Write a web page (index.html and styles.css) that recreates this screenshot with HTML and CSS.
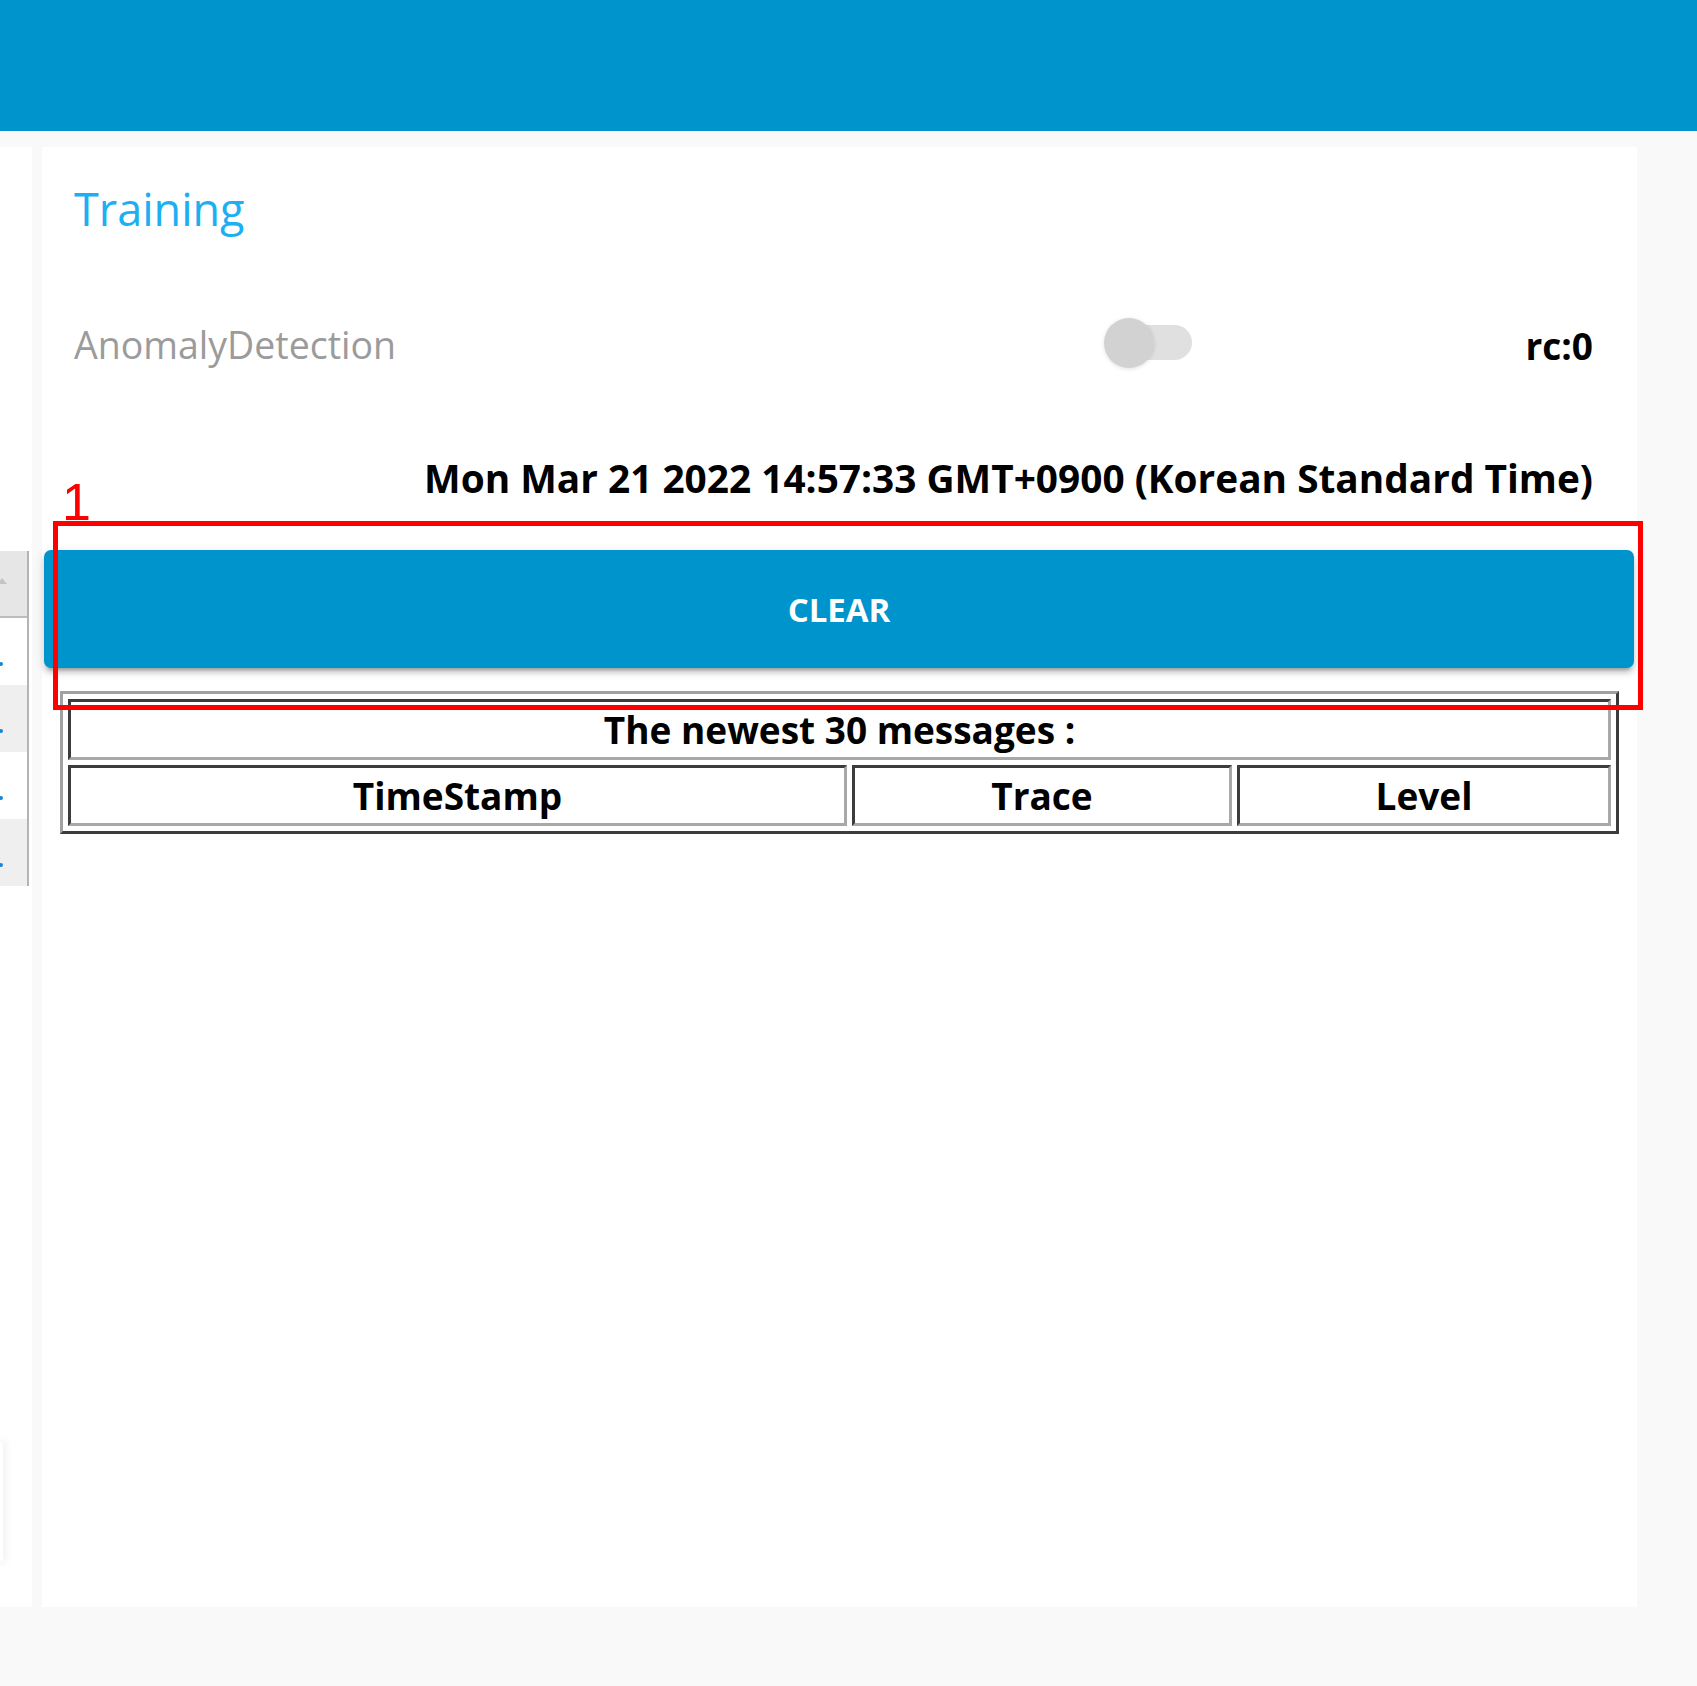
FILE: index.html
```html
<!DOCTYPE html>
<html lang="en">
<head>
<meta charset="utf-8">
<title>Training</title>
<link rel="stylesheet" href="styles.css">
</head>
<body>
<header class="topbar"></header>
<div class="layout">
  <aside class="sidebar">
    <div class="side-table">
      <div class="side-head"><span class="sort-caret"></span></div>
      <div class="side-row"><span class="dot"></span></div>
      <div class="side-row alt"><span class="dot"></span></div>
      <div class="side-row"><span class="dot"></span></div>
      <div class="side-row alt"><span class="dot"></span></div>
    </div>
    <div class="side-fab"></div>
  </aside>
  <main class="card">
    <h1 class="title">Training</h1>
    <div class="control-row">
      <span class="label">AnomalyDetection</span>
      <span class="switch"><span class="track"></span><span class="knob"></span></span>
      <span class="rc">rc:0</span>
    </div>
    <div class="date">Mon Mar 21 2022 14:57:33 GMT+0900 (Korean Standard Time)</div>
    <button class="clear-btn">CLEAR</button>
    <table class="messages">
      <colgroup>
        <col class="c-ts">
        <col class="c-tr">
        <col class="c-lv">
      </colgroup>
      <tr><th colspan="3">The newest 30 messages :</th></tr>
      <tr><th>TimeStamp</th><th>Trace</th><th>Level</th></tr>
    </table>
    <div class="annot-num">1</div>
    <div class="annot-box"></div>
  </main>
</div>
</body>
</html>
```

FILE: styles.css
```css
html, body {
  margin: 0;
  padding: 0;
}
body {
  width: 1697px;
  height: 1686px;
  background: #f9f9f9;
  font-family: "Open Sans", "Noto Sans", sans-serif;
  overflow: hidden;
}
.topbar {
  height: 131px;
  background: #0094cd;
  border-bottom: 2px solid #ffffff;
}
.layout {
  display: flex;
  gap: 10px;
  margin-top: 14px;
  height: 1460px;
}
.sidebar {
  width: 32px;
  background: #ffffff;
  display: flex;
  flex-direction: column;
}
.side-table {
  margin-top: 404px;
  width: 27px;
  border-right: 2px solid #b4b4b4;
}
.side-head {
  height: 67px;
  background: #e6e6e6;
  border-bottom: 2px solid #bdbdbd;
  box-sizing: border-box;
  position: relative;
}
.sort-caret {
  position: absolute;
  left: -3px;
  top: 27px;
  width: 0;
  height: 0;
  border-left: 5px solid transparent;
  border-right: 5px solid transparent;
  border-bottom: 6px solid #c4c4c4;
}
.side-row {
  height: 67px;
  background: #ffffff;
  position: relative;
}
.side-row.alt {
  background: #efefef;
}
.dot {
  position: absolute;
  left: -1px;
  top: 44px;
  width: 4px;
  height: 4px;
  border-radius: 50%;
  background: #1a86d0;
}
.side-fab {
  margin-top: 557px;
  width: 3px;
  height: 118px;
  background: #ffffff;
  box-shadow: 0 0 10px 2px rgba(0, 0, 0, 0.08);
}
.card {
  position: relative;
  width: 1595px;
  background: #ffffff;
  padding-top: 32px;
  box-sizing: border-box;
}
.title {
  margin: 0;
  padding: 0 44px 0 32px;
  font-size: 45px;
  line-height: 60px;
  font-weight: 400;
  color: #1cb0f3;
}
.control-row {
  margin-top: 78px;
  padding: 0 44px 0 32px;
  display: grid;
  grid-template-columns: 1030px 88px 1fr;
  align-items: center;
  height: 50px;
}
.label {
  font-size: 37.5px;
  line-height: 46px;
  padding-top: 4px;
  color: #9b9b9b;
}
.switch {
  position: relative;
  width: 88px;
  height: 50px;
}
.track {
  position: absolute;
  left: 6px;
  top: 7px;
  width: 82px;
  height: 35px;
  border-radius: 18px;
  background: #e0e0e0;
}
.knob {
  position: absolute;
  left: 0;
  top: 0;
  width: 50px;
  height: 50px;
  border-radius: 50%;
  background: #d2d2d2;
  box-shadow: 0 1px 4px rgba(0, 0, 0, 0.12);
}
.rc {
  text-align: right;
  font-size: 37px;
  font-weight: 700;
  line-height: 46px;
  padding-top: 6px;
  color: #000;
}
.date {
  margin-top: 85px;
  padding: 0 44px 0 32px;
  text-align: right;
  font-size: 38.8px;
  line-height: 52px;
  font-weight: 700;
  color: #000;
}
.clear-btn {
  display: block;
  margin: 46px 3px 0 2px;
  width: 1590px;
  height: 118px;
  border: 0;
  border-radius: 7px;
  background: #0094cd;
  color: #ffffff;
  font-family: "Open Sans", "Noto Sans", sans-serif;
  font-size: 33px;
  font-weight: 700;
  letter-spacing: 0;
  box-shadow: 0 6px 3px -4px rgba(0, 0, 0, 0.2), 0 5px 5px 0 rgba(0, 0, 0, 0.14), 0 3px 12px 0 rgba(0, 0, 0, 0.12);
}
.messages {
  margin: 23px 0 0 18px;
  width: 1559px;
  border-collapse: separate;
  border-spacing: 5px;
  border-style: solid;
  border-width: 3px;
  border-color: #a2a2a2 #3c3c3c #3c3c3c #a2a2a2;
  table-layout: fixed;
}
.c-ts { width: 779px; }
.c-tr { width: 380px; }
.c-lv { width: 374px; }
.messages th {
  height: 55px;
  padding: 0;
  border-style: solid;
  border-width: 3px;
  border-color: #3c3c3c #a8a8a8 #a8a8a8 #3c3c3c;
  font-size: 37px;
  font-weight: 700;
  color: #000;
  text-align: center;
  vertical-align: middle;
  line-height: 50px;
}
.annot-num {
  position: absolute;
  left: 20px;
  top: 329px;
  font-family: "Liberation Sans", Arial, sans-serif;
  font-size: 52px;
  line-height: 52px;
  color: #ff0000;
}
.annot-box {
  position: absolute;
  left: 11px;
  top: 374px;
  width: 1590px;
  height: 189px;
  box-sizing: border-box;
  border: 5px solid #ff0000;
}
```
